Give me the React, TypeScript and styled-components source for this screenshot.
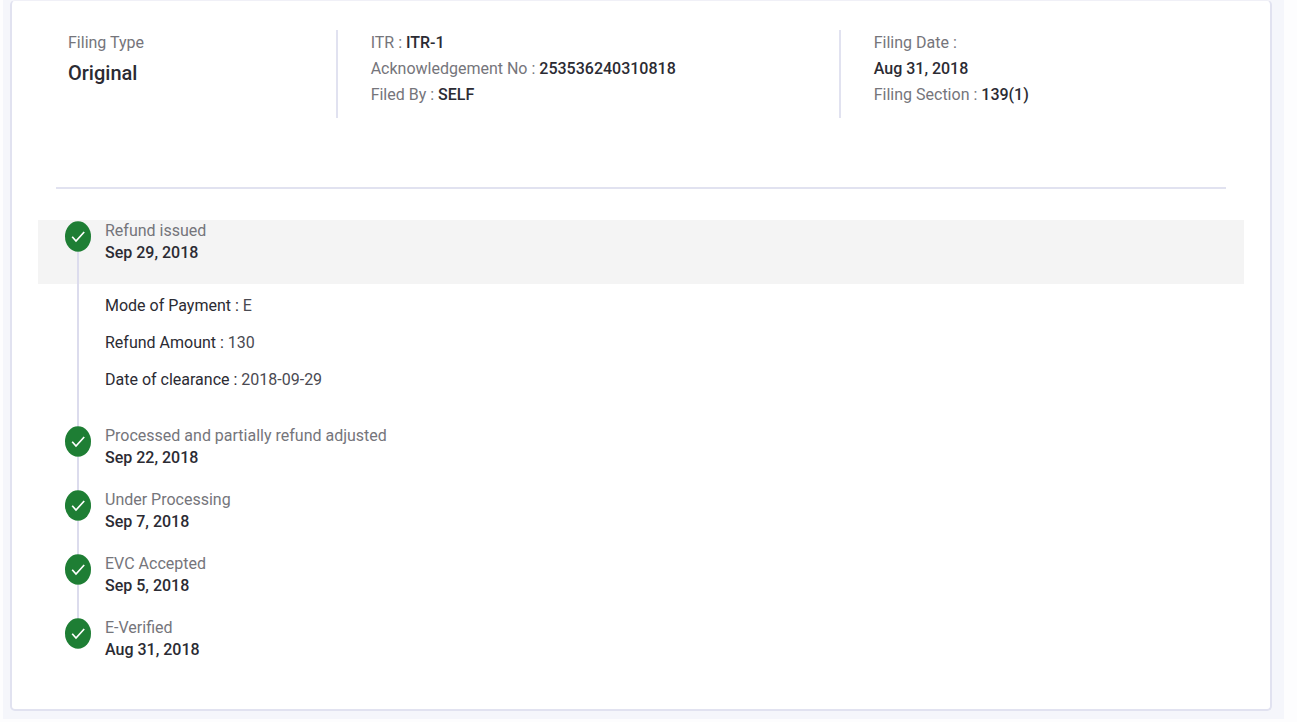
import React from "react";
import styled, { createGlobalStyle } from "styled-components";

const GlobalStyle = createGlobalStyle`
  * { box-sizing: border-box; }
  body {
    margin: 0;
    background: #fdfdfe;
    color: #2b2b33;
    font-family: Roboto, "Liberation Sans", sans-serif;
    font-size: 16px;
    line-height: 22px;
  }
`;

const Page = styled.main`
  margin: 0 13px 3px 3px;
  padding: 0 12px 8px 7px;
  background: #f5f6fb;
`;

const Card = styled.article`
  padding: 29px 26px 48px;
  background: #fff;
  border: 2px solid #e1e2f0;
  border-top: 1px solid #f0f0f7;
  border-radius: 5px;
`;

const Summary = styled.header`
  display: grid;
  grid-template-columns: 239fr 430fr 331fr;
  margin: 0 18px;
  padding-bottom: 69px;
  border-bottom: 2px solid #e1e2f0;
`;

const SummaryColumn = styled.section<{ $divided?: boolean }>`
  min-height: 88px;
  padding-left: ${(p) => (p.$divided ? 33 : 12)}px;
  border-left: ${(p) => (p.$divided ? "2px solid #e1e2f0" : "0")};
  line-height: 26px;
`;

const Line = styled.p`
  margin: 0;
`;

const Label = styled.span`
  color: #75757b;
`;

const Value = styled.strong`
  font-weight: 500;
`;

const FilingType = styled.h2`
  margin: 0;
  font-size: 20px;
  font-weight: 500;
  line-height: 34px;
`;

const Timeline = styled.ol`
  margin: 31px 0 0;
  padding: 0;
  list-style: none;
`;

const Step = styled.li`
  display: grid;
  grid-template-columns: 67px 1fr;
`;

const Rail = styled.div`
  grid-column: 1;
  grid-row: 1 / span 2;
  display: flex;
  flex-direction: column;
  align-items: center;
  padding-left: 13px;
  padding-top: 1px;
  z-index: 1;
`;

const Connector = styled.span`
  flex: 1;
  width: 2px;
  margin-bottom: -2px;
  background: #dcdced;
`;

const StepHead = styled.div<{ $active: boolean; $last: boolean }>`
  grid-column: 1 / -1;
  grid-row: 1;
  padding: 0 0 ${(p) => (p.$last ? 0 : 20)}px 67px;
  background: ${(p) => (p.$active ? "#f4f4f4" : "none")};
`;

const StepTitle = styled.h3`
  margin: 0;
  color: #75757b;
  font-size: 16px;
  font-weight: 400;
  line-height: 22px;
`;

const StepDate = styled.time`
  display: block;
  font-weight: 500;
`;

const Details = styled.div`
  grid-column: 2;
  grid-row: 2;
  display: flex;
  flex-direction: column;
  gap: 15px;
  padding: 11px 0 34px;
`;

const DetailValue = styled.span`
  color: #4a4a52;
`;

const Check = () => (
  <svg width="26" height="31" viewBox="0 0 26 31" aria-hidden="true">
    <ellipse cx="13" cy="15.5" rx="13" ry="15.3" fill="#1e7e34" />
    <path d="M7.2 15.8 L11 20 L19.2 11" fill="none" stroke="#fff" strokeWidth="1.7" />
  </svg>
);

interface StepData {
  title: string;
  date: string;
  details?: [string, string][];
}

const steps: StepData[] = [
  {
    title: "Refund issued",
    date: "Sep 29, 2018",
    details: [
      ["Mode of Payment", "E"],
      ["Refund Amount", "130"],
      ["Date of clearance", "2018-09-29"],
    ],
  },
  { title: "Processed and partially refund adjusted", date: "Sep 22, 2018" },
  { title: "Under Processing", date: "Sep 7, 2018" },
  { title: "EVC Accepted", date: "Sep 5, 2018" },
  { title: "E-Verified", date: "Aug 31, 2018" },
];

export default function App() {
  return (
    <>
      <GlobalStyle />
      <Page>
        <Card>
          <Summary>
            <SummaryColumn>
              <Line><Label>Filing Type</Label></Line>
              <FilingType>Original</FilingType>
            </SummaryColumn>
            <SummaryColumn $divided>
              <Line><Label>ITR : </Label><Value>ITR-1</Value></Line>
              <Line><Label>Acknowledgement No : </Label><Value>253536240310818</Value></Line>
              <Line><Label>Filed By : </Label><Value>SELF</Value></Line>
            </SummaryColumn>
            <SummaryColumn $divided>
              <Line><Label>Filing Date :</Label></Line>
              <Line><Value>Aug 31, 2018</Value></Line>
              <Line><Label>Filing Section : </Label><Value>139(1)</Value></Line>
            </SummaryColumn>
          </Summary>
          <Timeline>
            {steps.map((step, i) => (
              <Step key={step.title}>
                <StepHead $active={Boolean(step.details)} $last={i === steps.length - 1}>
                  <StepTitle>{step.title}</StepTitle>
                  <StepDate>{step.date}</StepDate>
                </StepHead>
                <Rail>
                  <Check />
                  {i < steps.length - 1 && <Connector />}
                </Rail>
                {step.details && (
                  <Details>
                    {step.details.map(([name, value]) => (
                      <Line key={name}>{name} : <DetailValue>{value}</DetailValue></Line>
                    ))}
                  </Details>
                )}
              </Step>
            ))}
          </Timeline>
        </Card>
      </Page>
    </>
  );
}
